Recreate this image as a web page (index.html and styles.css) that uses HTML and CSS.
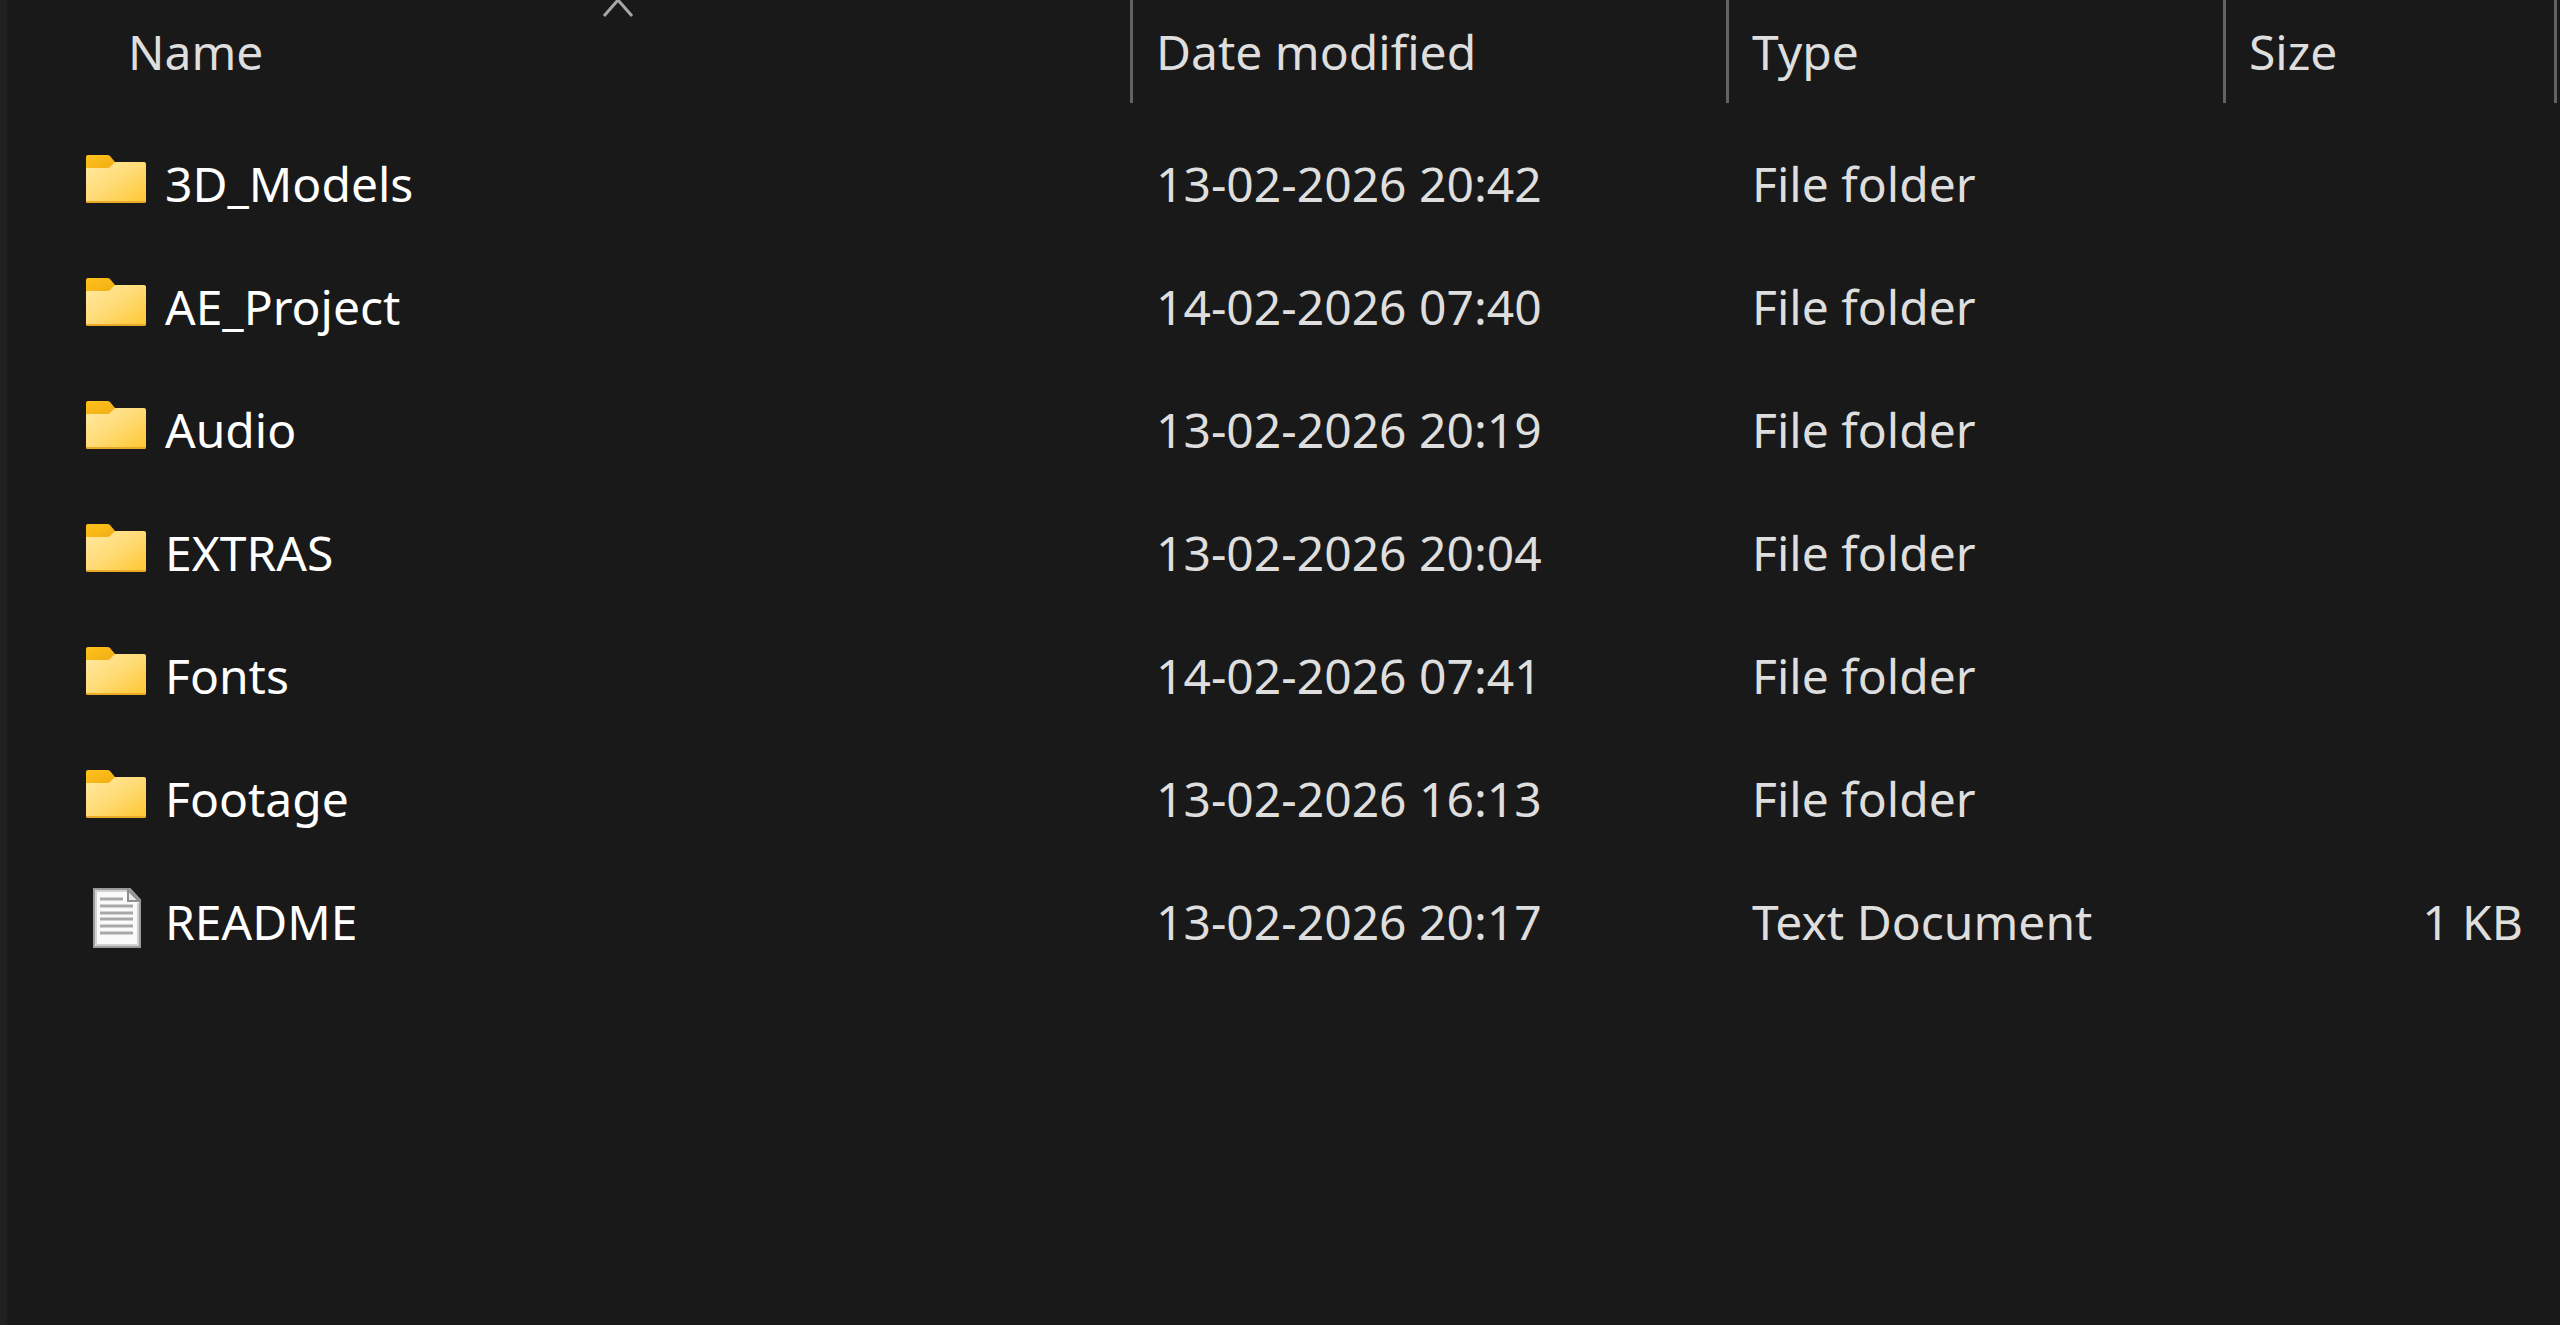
FILE: index.html
```html
<!DOCTYPE html>
<html lang="en">
<head>
    <meta charset="UTF-8">
    <meta name="viewport" content="width=device-width, initial-scale=1.0">
    <title>Files</title>
    <link rel="stylesheet" href="styles.css">
</head>
<body>

<!-- shared icons -->
<svg class="sprite" aria-hidden="true">
    <defs>
        <linearGradient id="tabFill" x1="0" y1="0" x2="1" y2="1">
            <stop offset="0" stop-color="#ffc21c"/>
            <stop offset="1" stop-color="#eaa510"/>
        </linearGradient>
        <linearGradient id="frontFill" x1="0" y1="0" x2="1" y2="1">
            <stop offset="0" stop-color="#ffe9a2"/>
            <stop offset="0.5" stop-color="#ffdb75"/>
            <stop offset="1" stop-color="#ffc62f"/>
        </linearGradient>
        <symbol id="folder" viewBox="0 0 60 60">
            <path fill="url(#tabFill)" d="M2 5h19q2 0 3 1l5 6h15v12H0V7q0-2 2-2z"/>
            <path fill="url(#frontFill)" d="M0 18h21q2 0 3-1l4-4q1-1 3-1h27q2 0 2 2v37q0 2-2 2H2q-2 0-2-2z"/>
            <path fill="#e9aa28" d="M0 51h60q0 2-2 2H2q-2 0-2-2z"/>
        </symbol>
        <symbol id="textfile" viewBox="0 0 60 60">
            <path fill="#fafafa" stroke="#9b9b9b" stroke-width="2" d="M8 1h36l10 11v47H8z"/>
            <path fill="none" stroke="#d2d2d2" stroke-width="2" d="M10 57V3h31M10 57h42V15"/>
            <path fill="#e8e8e8" stroke="#8f8f8f" stroke-width="2" d="M42 2v11h11z"/>
            <path stroke="#a8a8a8" stroke-width="3" d="M14 11h23M14 18h33M14 25h33M14 31h33M14 38h33M14 45h33"/>
        </symbol>
    </defs>
</svg>

<main class="pane">
    <table class="files">
        <colgroup>
            <col>
            <col class="col-date">
            <col class="col-type">
            <col class="col-size">
        </colgroup>
        <thead>
            <tr>
                <th class="name-head" aria-sort="ascending">
                    <button type="button">
                        <svg class="sort" viewBox="0 0 32 23" aria-hidden="true"><path d="M2 22L16 6l14 16"/></svg>
                        Name
                    </button>
                </th>
                <th><button type="button">Date modified</button></th>
                <th><button type="button">Type</button></th>
                <th><button type="button">Size</button></th>
            </tr>
        </thead>
        <tbody>
            <tr>
                <td><div class="file"><svg class="icon"><use href="#folder"/></svg>3D_Models</div></td>
                <td>13-02-2026 20:42</td>
                <td>File folder</td>
                <td></td>
            </tr>
            <tr>
                <td><div class="file"><svg class="icon"><use href="#folder"/></svg>AE_Project</div></td>
                <td>14-02-2026 07:40</td>
                <td>File folder</td>
                <td></td>
            </tr>
            <tr>
                <td><div class="file"><svg class="icon"><use href="#folder"/></svg>Audio</div></td>
                <td>13-02-2026 20:19</td>
                <td>File folder</td>
                <td></td>
            </tr>
            <tr>
                <td><div class="file"><svg class="icon"><use href="#folder"/></svg>EXTRAS</div></td>
                <td>13-02-2026 20:04</td>
                <td>File folder</td>
                <td></td>
            </tr>
            <tr>
                <td><div class="file"><svg class="icon"><use href="#folder"/></svg>Fonts</div></td>
                <td>14-02-2026 07:41</td>
                <td>File folder</td>
                <td></td>
            </tr>
            <tr>
                <td><div class="file"><svg class="icon"><use href="#folder"/></svg>Footage</div></td>
                <td>13-02-2026 16:13</td>
                <td>File folder</td>
                <td></td>
            </tr>
            <tr>
                <td><div class="file"><svg class="icon"><use href="#textfile"/></svg>README</div></td>
                <td>13-02-2026 20:17</td>
                <td>Text Document</td>
                <td class="size">1 KB</td>
            </tr>
        </tbody>
    </table>
</main>

</body>
</html>
```
FILE: styles.css
```css
* { box-sizing: border-box; }
body { margin: 0; background: #191919; color: #dedede; font-family: "Noto Sans", "Open Sans", sans-serif; font-size: 48px; line-height: 63px; }
.sprite { position: absolute; width: 0; height: 0; }

.pane { min-height: 100vh; border-left: 7px solid #202020; padding-right: 3px; }

.files { width: 100%; table-layout: fixed; border-collapse: separate; border-spacing: 0; }
.col-date { width: 596px; }
.col-type { width: 497px; }
.col-size { width: 331px; }

th { padding: 0; border-right: 3px solid #636363; font-weight: normal; text-align: left; }
th button { position: relative; display: block; width: 100%; padding: 20px 23px; border: none; background: none; color: inherit; font: inherit; text-align: left; white-space: nowrap; cursor: pointer; }
.name-head { padding-left: 98px; }

/* sort arrow sits over the top edge of the header */
.sort { position: absolute; top: -6px; left: 50%; width: 32px; height: 23px; margin-left: -16px; fill: none; stroke: #a6a6a6; stroke-width: 3; }

/* gap between header and rows */
tbody::before { content: ""; display: block; height: 19px; }

td { height: 123px; padding: 0 23px; vertical-align: middle; white-space: nowrap; }
td:first-child { padding-left: 79px; color: #fff; }
.file { display: flex; align-items: center; gap: 19px; }
.icon { flex: none; width: 60px; height: 60px; margin-bottom: 8px; }
.size { padding-right: 34px; text-align: right; }
```
